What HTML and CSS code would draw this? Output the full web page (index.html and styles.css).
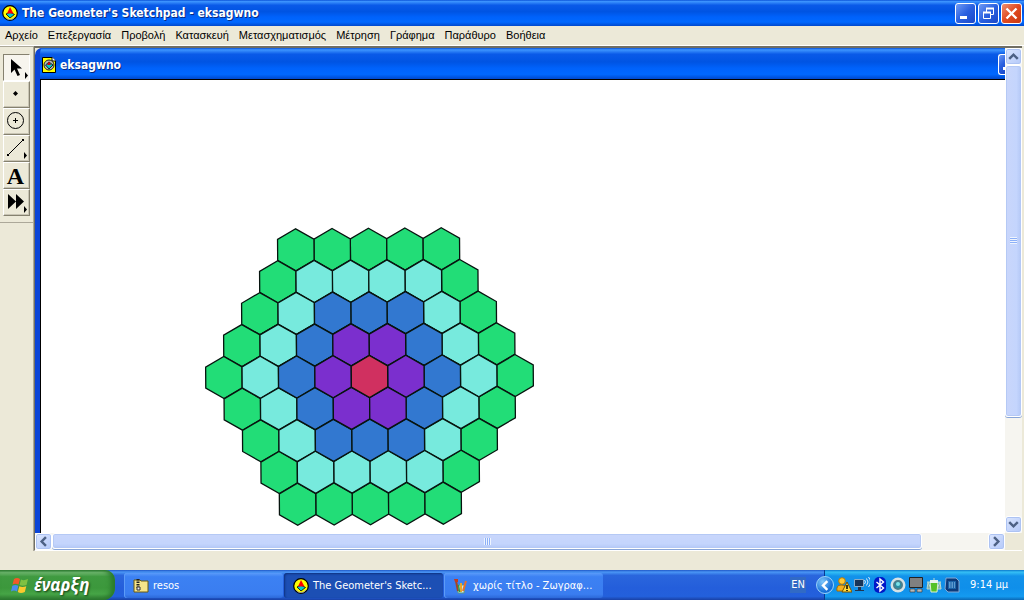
FILE: index.html
```html
<!DOCTYPE html>
<html lang="el">
<head>
<meta charset="utf-8">
<title>The Geometer's Sketchpad - eksagwno</title>
<link rel="stylesheet" href="styles.css">
</head>
<body>
<svg class="defs" aria-hidden="true">
  <defs>
    <symbol id="logo" viewBox="0 0 16 16">
      <circle cx="8" cy="8" r="7.300" fill="#ff0" stroke="#000" stroke-width="1.200"/>
      <path d="M3.500 12.500A6 6 0 0 0 13 12" fill="none" stroke="#999" stroke-width="1"/>
      <path d="M4 9 8 7l4.500 2.500L8 13z" fill="#0cc" stroke="#000" stroke-width=".8"/>
      <path d="M8 2 11.500 8.500H5z" fill="#f00"/>
    </symbol>
    <path id="hex" d="M0-21 18.200-10.500V10.500L0 21-18.200 10.500V-10.500z"/>
    <g id="row1"><use href="#hex"/></g>
    <g id="row2"><use href="#hex" x="-18.200"/><use href="#hex" x="18.200"/></g>
    <g id="row3"><use href="#row1"/><use href="#hex" x="-36.400"/><use href="#hex" x="36.400"/></g>
    <g id="row4"><use href="#row2"/><use href="#hex" x="-54.600"/><use href="#hex" x="54.600"/></g>
    <g id="row5"><use href="#row3"/><use href="#hex" x="-72.800"/><use href="#hex" x="72.800"/></g>
    <g id="row6"><use href="#row4"/><use href="#hex" x="-91"/><use href="#hex" x="91"/></g>
    <g id="row7"><use href="#row5"/><use href="#hex" x="-109.200"/><use href="#hex" x="109.200"/></g>
    <g id="row8"><use href="#row6"/><use href="#hex" x="-127.400"/><use href="#hex" x="127.400"/></g>
    <g id="row9"><use href="#row7"/><use href="#hex" x="-145.600"/><use href="#hex" x="145.600"/></g>
  </defs>
</svg>

<header class="titlebar">
  <svg class="icon16"><use href="#logo"/></svg>
  <h1 class="title">The Geometer's Sketchpad - eksagwno</h1>
  <div class="controls">
    <button class="control" aria-label="Minimize"><svg class="glyph" viewBox="0 0 19 19"><path d="M4 12h7v3H4z" fill="#fff"/></svg></button>
    <button class="control" aria-label="Restore"><svg class="glyph" viewBox="0 0 19 19"><path d="M7.500 8V4.500h7v6H12M4.500 8.500h7v6h-7z" fill="none" stroke="#fff"/><path d="M7 4.500h8M4 8.500h8" stroke="#fff" stroke-width="2"/></svg></button>
    <button class="control close" aria-label="Close"><svg class="glyph" viewBox="0 0 19 19"><path d="M4.500 4.500l10 10m0-10-10 10" stroke="#fff" stroke-width="2.400"/></svg></button>
  </div>
</header>

<nav class="menubar">
  <button class="menu">Αρχείο</button>
  <button class="menu">Επεξεργασία</button>
  <button class="menu">Προβολή</button>
  <button class="menu">Κατασκευή</button>
  <button class="menu">Μετασχηματισμός</button>
  <button class="menu">Μέτρηση</button>
  <button class="menu">Γράφημα</button>
  <button class="menu">Παράθυρο</button>
  <button class="menu">Βοήθεια</button>
</nav>

<main class="workspace">
  <aside class="toolbox">
    <div class="tools">
      <button class="tool active" aria-label="Select"><svg class="toolicon" viewBox="0 0 25 25"><path d="M7 4v14l3.500-3.500L13.500 21l2.500-1-3-6.500h5z"/><path d="M21 17l3 3.500-3 3.500z"/></svg></button>
      <button class="tool" aria-label="Point"><svg class="toolicon" viewBox="0 0 25 25"><path d="M11.500 9 14 11.500 11.500 14 9 11.500z"/></svg></button>
      <button class="tool" aria-label="Circle"><svg class="toolicon" viewBox="0 0 25 25"><circle cx="11.500" cy="11.500" r="8" fill="none" stroke="#000"/><path d="M9 11.500h5M11.500 9v5" stroke="#000"/></svg></button>
      <button class="tool" aria-label="Segment"><svg class="toolicon" viewBox="0 0 25 25"><path d="M4 19 19 4" stroke="#000"/><path d="M3 18h2v2H3zM18 3h2v2h-2zM20 16l3 3.500-3 3.500z"/></svg></button>
      <button class="tool letter" aria-label="Text">A</button>
      <button class="tool" aria-label="Custom tools"><svg class="toolicon" viewBox="0 0 25 25"><path d="M4 4l8 7.500L4 19zM12 4l8 7.500-8 7.500zM20 16l3 3.500-3 3.500z"/></svg></button>
    </div>
  </aside>

  <section class="mdi">
    <div class="child">
      <div class="childbar">
        <svg class="docicon" viewBox="0 0 14 16"><path d="M.5.500h10L13.500 4v11.500H.5z" fill="#ff0" stroke="#000"/><path d="M10 0v4h4" fill="#fff" stroke="#000"/><circle cx="7" cy="8" r="5" fill="#bbb" stroke="#222"/><path d="M3.500 8 7 5l4 3-4 4z" fill="#0cc" stroke="#000" stroke-width=".8"/><path d="M7 4.500 9 8H5z" fill="#d00"/></svg>
        <h2 class="title">eksagwno</h2>
        <button class="control partial" aria-label="Minimize sketch"><svg class="partialglyph" viewBox="0 0 6 19"><path d="M4 12h2v3H4z" fill="#fff"/></svg></button>
      </div>
      <div class="canvas">
        <svg class="sketch" viewBox="0 0 340 304" role="img" aria-label="Hexagon rings">
          <g transform="translate(169.500 151.500) rotate(-.4)" stroke="#07140f" stroke-width="1.300">
            <g fill="#22dd77">
              <use href="#row5" y="-127.200"/><use href="#row6" y="-95.400"/><use href="#row7" y="-63.600"/><use href="#row8" y="-31.800"/><use href="#row9"/>
              <use href="#row8" y="31.800"/><use href="#row7" y="63.600"/><use href="#row6" y="95.400"/><use href="#row5" y="127.200"/>
            </g>
            <g fill="#77eadd">
              <use href="#row4" y="-95.400"/><use href="#row5" y="-63.600"/><use href="#row6" y="-31.800"/><use href="#row7"/>
              <use href="#row6" y="31.800"/><use href="#row5" y="63.600"/><use href="#row4" y="95.400"/>
            </g>
            <g fill="#3278d0">
              <use href="#row3" y="-63.600"/><use href="#row4" y="-31.800"/><use href="#row5"/><use href="#row4" y="31.800"/><use href="#row3" y="63.600"/>
            </g>
            <g fill="#7b2fce"><use href="#row2" y="-31.800"/><use href="#row3"/><use href="#row2" y="31.800"/></g>
            <use href="#row1" fill="#d03060"/>
          </g>
        </svg>
      </div>
    </div>
    <div class="vscroll">
      <button class="arrow" aria-label="Up"><svg class="chev" viewBox="0 0 9 9"><path d="M1 6.500 4.500 3 8 6.500"/></svg></button>
      <div class="vtrack"><div class="vthumb"></div></div>
      <button class="arrow" aria-label="Down"><svg class="chev" viewBox="0 0 9 9"><path d="M1 2.500 4.500 6 8 2.500"/></svg></button>
    </div>
    <div class="hscroll">
      <button class="arrow" aria-label="Left"><svg class="chev" viewBox="0 0 9 9"><path d="M6.500 1 3 4.500 6.500 8"/></svg></button>
      <div class="htrack"><div class="hthumb"></div></div>
      <button class="arrow" aria-label="Right"><svg class="chev" viewBox="0 0 9 9"><path d="M2.500 1 6 4.500 2.500 8"/></svg></button>
    </div>
  </section>
</main>
<div class="status"></div>

<footer class="taskbar">
  <button class="start">
    <svg class="flag" viewBox="0 0 18 18"><path d="M3 3q3-2 6 0L7.500 8.500q-3-1.500-6 0z" fill="#f2592a"/><path d="M10 3.500q3 1.500 7-.5l-1.500 6q-4 1.500-7 0z" fill="#7fc142"/><path d="M1.300 9.700q3-1.500 6 0L6 15.500q-3-2-6 0z" fill="#4a8df0"/><path d="M8.300 10.300q3 1.500 7 0l-1.500 5.700q-4 2-7 0z" fill="#fbc92e"/></svg>
    <span>έναρξη</span>
  </button>
  <div class="tasks">
    <button class="task">
      <svg class="icon16" viewBox="0 0 16 16"><path d="M1 2h6l1 1h7v11H1z" fill="#f6e58b" stroke="#6b5a10"/><path d="M5 1v10" stroke="#222" stroke-width="3" stroke-dasharray="1.500 1"/><path d="M4 9h3v3H4z" fill="#eee" stroke="#333"/></svg>
      <span>resos</span></button>
    <button class="task current"><svg class="icon16"><use href="#logo"/></svg><span>The Geometer's Sketc...</span></button>
    <button class="task">
      <svg class="icon16" viewBox="0 0 16 16"><path d="M4 7h8l-1 8H5z" fill="#cfe8e0" stroke="#598"/><path d="M5 13 3 3" stroke="#a44424" stroke-width="2"/><path d="M8 14V5" stroke="#e9a72c" stroke-width="2"/><path d="m10 13 3-10" stroke="#e8702c" stroke-width="2"/><path d="m6.500 14-1-7" stroke="#2a9a44" stroke-width="1.500"/><path d="M1 1h4v3H2z" fill="#c33a1d"/></svg>
      <span>χωρίς τίτλο - Ζωγραφ...</span></button>
  </div>
  <button class="lang">EN</button>
  <div class="tray">
    <button class="expand" aria-label="Show icons"><svg class="chev" viewBox="0 0 9 9"><path d="M6 1 2.500 4.500 6 8"/></svg></button>
    <svg class="icon16" viewBox="0 0 16 16"><circle cx="6" cy="4" r="3.300" fill="#ffca35" stroke="#b37a06"/><path d="M1 14q-1-6 4-6 6 0 6 6z" fill="#f5b01e" stroke="#a76c00"/><path d="M11 5l5 10H6z" fill="#ffda3a" stroke="#785200"/><path d="M11 8v4m0 1v1" stroke="#000" stroke-width="1.500"/></svg>
    <svg class="icon16" viewBox="0 0 16 16"><path d="M.5 2.500h9v7h-9z" fill="#183458" stroke="#8badc8"/><path d="M4 10h3v3h3v1H1v-1h3z" fill="#203450"/><path d="M10.500 3q2 2 0 4M12.500 1.500q3 3.500 0 7M14.500 0q4 5 0 10" fill="none" stroke="#dceaff"/></svg>
    <svg class="icon16" viewBox="0 0 16 16"><rect x="2" width="12" height="16" rx="5" fill="#0018c8"/><path d="m4.500 5 7 6L8 14V2l3.500 3-7 6" fill="none" stroke="#fff" stroke-width="1.400"/></svg>
    <svg class="icon16" viewBox="0 0 16 16"><circle cx="8" cy="8" r="7.500" fill="#d6e2e5"/><circle cx="8" cy="8" r="4" fill="#288fa5" stroke="#4a7e8c" stroke-width="2"/><circle cx="8" cy="7" r="2" fill="#7de2e8"/></svg>
    <svg class="icon16" viewBox="0 0 16 16"><path d="M1.500.500h13v10h-13z" fill="#808080" stroke="#222"/><path d="M2 12h5v3H2zM9 12h5v3H9z" fill="#b9b9b9" stroke="#333" stroke-width=".6"/></svg>
    <svg class="icon16" viewBox="0 0 16 16"><path d="M1 5h14M8 1v4M2 5l-1 7h4zM14 5l1 7h-4z" fill="#8ab0a4" stroke="#b9d9cf"/><path d="M4 5h8l-1 10H5z" fill="#57c128" stroke="#dcf2d0"/><path d="M4 3h8v3H4z" fill="#e8f1ed"/></svg>
    <svg class="icon16" viewBox="0 0 16 16"><path d="M2 1h10l3 3v11H4l-3-3z" fill="#0c3a7a" stroke="#83a9d5"/><path d="M4 4h8v8H4z" fill="#1c63a8"/><path d="M5 6h6M5 8h6M5 10h6" stroke="#9fd2f5" stroke-dasharray="1.500 1"/></svg>
    <time class="clock">9:14 μμ</time>
  </div>
</footer>
</body>
</html>
```
FILE: styles.css
```css
* { box-sizing: border-box; }

body {
  margin: 0;
  height: 100vh;
  display: flex;
  flex-direction: column;
  overflow: hidden;
  background: #ece9d8;
  color: #000;
  font: 11px/14px "DejaVu Sans Condensed", "DejaVu Sans", sans-serif;
}

button {
  margin: 0;
  padding: 0;
  border: 0;
  background: none;
  color: inherit;
  font: inherit;
}

svg { display: block; flex: none; }
.defs { position: absolute; width: 0; height: 0; }
.icon16 { width: 16px; height: 16px; }

.titlebar, .childbar {
  display: flex;
  flex: none;
  align-items: center;
  background: linear-gradient(#0a52d8 0, #3d95ff 6%, #0a5ae8 20%, #0054e3 45%, #0062fb 65%, #0068ff 85%, #0048cc 100%);
}

.titlebar { height: 26px; padding: 0 2px; gap: 4px; }

.title {
  flex: 1;
  margin: 0;
  color: #fff;
  font-size: 12px;
  line-height: 16px;
  font-weight: bold;
  text-shadow: 1px 1px #0a2a80;
  white-space: nowrap;
}

.controls { display: flex; gap: 2px; }

.control {
  width: 21px;
  height: 21px;
  border: 1px solid #fff;
  border-radius: 3px;
  background: linear-gradient(135deg, #6f9bf5, #2a60e0 50%, #1b48c8);
}

.control.close { background: linear-gradient(135deg, #f09070, #e04a20 50%, #c83810); }
.glyph { width: 19px; height: 19px; }
.partialglyph { width: 6px; height: 19px; }

.menubar {
  display: flex;
  flex: none;
  gap: 10px;
  height: 19px;
  padding: 0 5px 1px;
  font-family: "Liberation Sans", Arial, sans-serif;
  white-space: nowrap;
}

.workspace {
  display: flex;
  flex: 1;
  min-height: 0;
  border-top: 1px solid #fff;
}

.toolbox { width: 34px; flex: none; border-top: 1px solid #aca899; border-right: 1px solid #aca899; }

.tools {
  display: flex;
  flex-direction: column;
  padding: 7px 3px 6px;
  border-bottom: 1px solid #aca899;
}

.tool {
  width: 27px;
  height: 27px;
  border: 1px solid;
  border-color: #fff #85816f #85816f #fff;
  box-shadow: inset -1px -1px #c8c4b4;
}

.tool.active {
  border-color: #85816f #fff #fff #85816f;
  background: #f7f5ee;
  box-shadow: none;
}

.toolicon { width: 25px; height: 25px; }
.letter { padding-right: 2px; font: bold 24px/24px "Liberation Serif", serif; }

.mdi {
  display: grid;
  flex: 1;
  min-width: 0;
  grid-template-columns: 1fr 17px;
  grid-template-rows: 1fr 17px;
  margin-right: 2px;
  border: solid #716f64;
  border-width: 2px 0 0 1px;
  border-bottom: 1px solid #fff;
}

.child {
  display: flex;
  flex-direction: column;
  min-width: 0;
  min-height: 0;
  overflow: hidden;
  border-left: 5px solid #0b45d8;
  border-top-left-radius: 7px;
  background: #0b45d8;
}

.childbar { height: 31px; padding: 2px 0 0 2px; gap: 4px; }
.docicon { width: 14px; height: 16px; }
.control.partial { width: 7px; border-right: 0; border-radius: 3px 0 0 3px; }

.canvas {
  flex: 1;
  min-height: 0;
  overflow: hidden;
  padding: 145px 0 0 159px;
  border: solid #000;
  border-width: 1px 0 0 1px;
  background: #fff;
}

.sketch { width: 340px; height: 304px; }

.vscroll, .hscroll { display: flex; background: #f6f5f0; }
.vscroll { flex-direction: column; }

.arrow {
  display: grid;
  place-items: center;
  flex: none;
  width: 17px;
  height: 17px;
  border: 1px solid #fff;
  border-radius: 3px;
  background: linear-gradient(135deg, #dbe6ff, #b4c9f9);
  box-shadow: inset 0 0 0 1px #adc3f3;
}

.chev { width: 11px; height: 11px; fill: none; stroke: #4d6185; stroke-width: 2; }
.vtrack, .htrack { flex: 1; min-width: 0; min-height: 0; }

.vthumb, .hthumb {
  display: grid;
  place-items: center;
  border: 1px solid #fff;
  border-radius: 3px;
  background: linear-gradient(90deg, #c9d6fb, #c4d5fd 70%, #b4c8f6);
  box-shadow: inset 0 0 0 1px #b5c9f5, 0 1px #88a5d8;
}

.vthumb { height: 78%; }
.hthumb { height: 16px; width: 93%; background: linear-gradient(#c9d6fb, #c4d5fd 70%, #b4c8f6); }

.vthumb::after, .hthumb::after { content: ""; width: 7px; height: 7px; }
.vthumb::after { background: repeating-linear-gradient(#eef4fe 0 1px, #8cb0f8 1px 2px); }
.hthumb::after { background: repeating-linear-gradient(90deg, #eef4fe 0 1px, #8cb0f8 1px 2px); }

.status { height: 19px; flex: none; }

.taskbar {
  display: flex;
  flex: none;
  height: 30px;
  color: #fff;
  white-space: nowrap;
  background: linear-gradient(#1f58c8 0, #4a96f5 7%, #2a66dd 18%, #245edb 60%, #2360dc 88%, #1941a5 100%);
}

.start {
  display: flex;
  align-items: center;
  gap: 5px;
  width: 115px;
  padding-left: 11px;
  border-radius: 0 10px 12px 0;
  background: linear-gradient(#2f7a34 0, #71b871 8%, #3f9a40 22%, #3c983c 60%, #46a546 80%, #2c7430 100%);
  box-shadow: inset -4px 0 5px #2a7a2c;
  font: italic bold 17px/24px "Noto Sans", sans-serif;
  text-shadow: 1px 1px 2px #153f16;
}

.flag { width: 18px; height: 18px; }

.tasks {
  display: flex;
  flex: 1;
  gap: 1px;
  min-width: 0;
  padding: 3px 0 2px 9px;
}

.task {
  display: flex;
  flex: 0 1 159px;
  align-items: center;
  gap: 4px;
  padding: 0 9px;
  border-radius: 3px;
  background: linear-gradient(#5a9bfa 0, #3c81f3 15%, #3a7df0 85%, #2c68d8 100%);
  box-shadow: inset 1px 0 #5c9cf8;
}

.task.current { background: #1c4fb4; box-shadow: inset 1px 1px 2px #0e3180; }

.lang { align-self: center; width: 16px; height: 16px; margin-right: 18px; background: #316ac5; }

.tray {
  display: flex;
  align-items: center;
  gap: 2px;
  padding-right: 16px;
  border-left: 1px solid #0a3a90;
  background: linear-gradient(#0b78cc 0, #35bff5 7%, #1292ea 20%, #0f8fea 60%, #149af0 88%, #0b68b5 100%);
}

.expand {
  display: grid;
  place-items: center;
  width: 18px;
  height: 18px;
  margin-left: -9px;
  border: 1px solid #9cd4fa;
  border-radius: 50%;
  background: radial-gradient(circle at 35% 30%, #7fc7fa, #1670d8 65%);
}

.expand .chev { stroke: #fff; }
.clock { margin-left: 8px; }
```
